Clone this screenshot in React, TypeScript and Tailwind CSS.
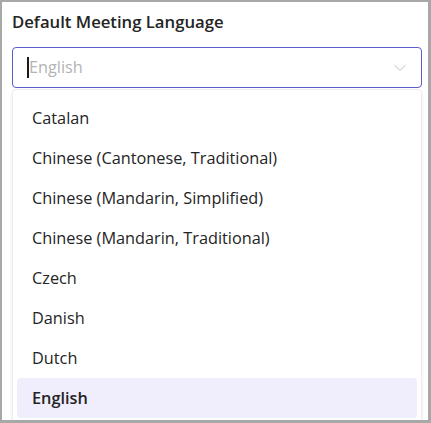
import { ChevronDown } from "lucide-react";

const languages = [
  "Catalan",
  "Chinese (Cantonese, Traditional)",
  "Chinese (Mandarin, Simplified)",
  "Chinese (Mandarin, Traditional)",
  "Czech",
  "Danish",
  "Dutch",
  "English",
];

export default function App() {
  const selected = "English";
  return (
    <div
      className="w-[431px] h-[423px] overflow-hidden bg-white border-l-2 border-t-2 border-r-[3px] border-b-[3px] border-[#a8a8a8] text-[#242424]"
      style={{ fontFamily: "'Open Sans', sans-serif" }}
    >
      <div className="pl-[10px] pr-[5px] pt-[9px]">
        <h2 className="text-[16.7px] leading-[22px] font-semibold">Default Meeting Language</h2>

        {/* Combobox */}
        <div className="mt-[14px] h-[41px] w-[410px] flex items-center rounded-[4px] border border-[#5b5fc7] pl-[14px] pr-[11px]">
          <span className="w-[2px] h-[21px] bg-[#1a1a1a]" />
          <span className="text-[16.3px] text-[#b3b3b3] flex-1">English</span>
          <ChevronDown size={20} strokeWidth={1} className="text-[#ababab]" />
        </div>

        {/* Listbox */}
        <div className="mt-px w-[410px] h-[340px] rounded-[4px] border border-[#ededed] shadow-[0_2px_4px_rgba(0,0,0,0.08)] px-1 pt-[8px]">
          {languages.map((lang) => (
            <div
              key={lang}
              className={
                "h-[40px] flex items-center rounded-[4px] pl-[15px] text-[16.3px] " +
                (lang === selected ? "bg-[#f0eefc] font-semibold" : "")
              }
            >
              {lang}
            </div>
          ))}
        </div>
      </div>
    </div>
  );
}
